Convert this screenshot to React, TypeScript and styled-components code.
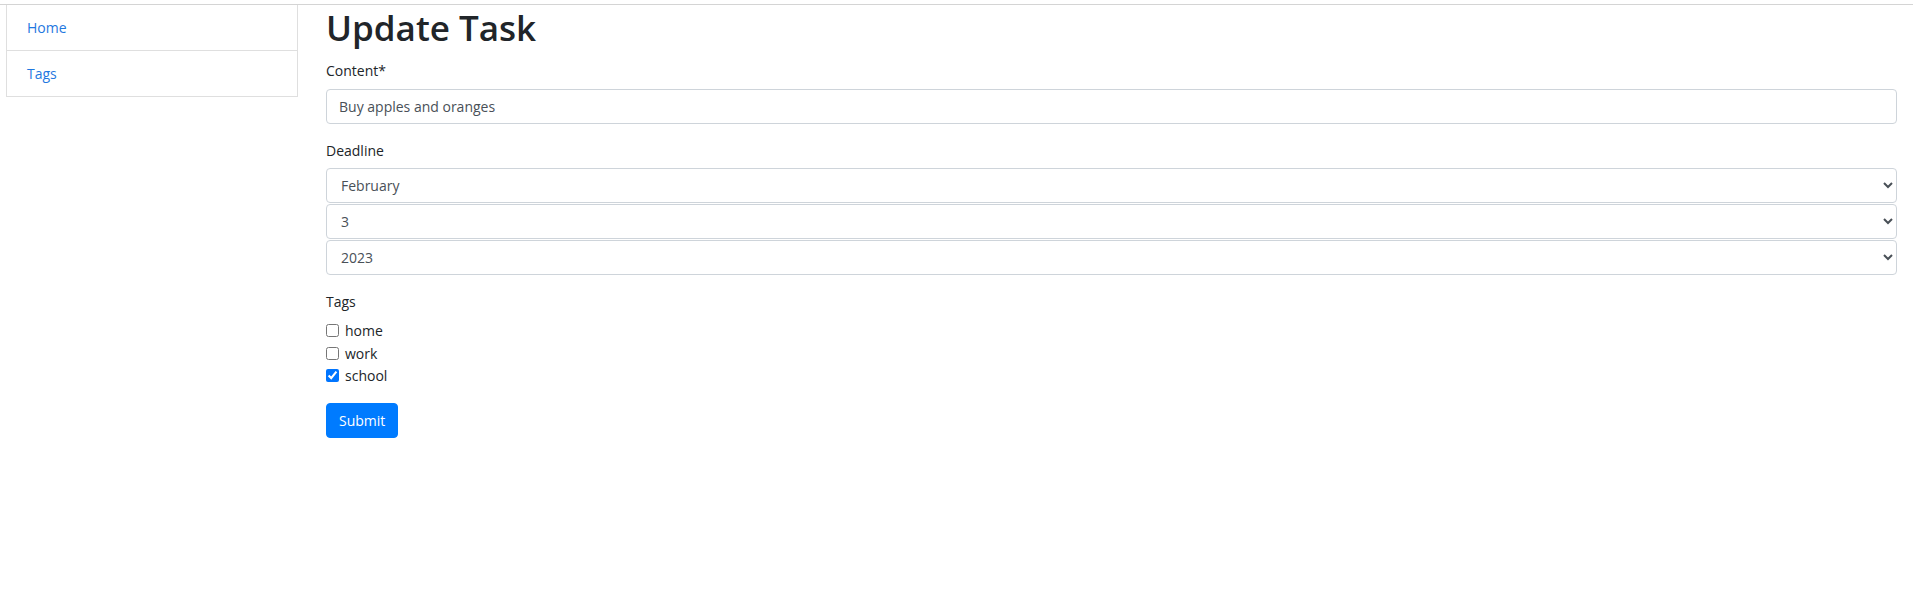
import React from "react";
import styled, { createGlobalStyle } from "styled-components";

const GlobalStyle = createGlobalStyle`
  html, body {
    margin: 0;
    padding: 0;
    background: #fff;
  }
  body {
    font-family: "Open Sans", "Liberation Sans", sans-serif;
    font-size: 14px;
    line-height: 1.5;
    color: #212529;
  }
  * {
    box-sizing: border-box;
  }
`;

const TopRule = styled.div`
  height: 5px;
  margin-right: 7px;
  border-bottom: 1px solid #d4d4d4;
`;

const Layout = styled.div`
  display: flex;
  align-items: flex-start;
  gap: 28px;
  padding: 0 23px 0 6px;
`;

const Sidebar = styled.nav`
  width: 292px;
  flex: none;
  display: flex;
  flex-direction: column;
  border: 1px solid rgba(0, 0, 0, 0.125);
  border-top: none;
`;

const SideLink = styled.a`
  display: block;
  padding: 12px 20px;
  line-height: 21px;
  color: #1f78e0;
  text-decoration: none;
  & + & {
    border-top: 1px solid rgba(0, 0, 0, 0.125);
  }
`;

const Main = styled.main`
  flex: 1;
  min-width: 0;
`;

const Title = styled.h1`
  margin: -1px 0 8px;
  font-size: 35px;
  font-weight: 600;
  line-height: 48px;
  color: #212529;
`;

const FormGroup = styled.div`
  margin-bottom: 16px;
`;

const Label = styled.label`
  display: block;
  line-height: 21px;
  margin-bottom: 7.5px;
`;

const TextInput = styled.input`
  display: block;
  width: 100%;
  height: 35px;
  padding: 0 12px;
  font: inherit;
  font-size: 14px;
  color: #495057;
  background: #fff;
  border: 1px solid #ced4da;
  border-radius: 4px;
  outline: none;
`;

const Select = styled.select`
  display: block;
  width: 100%;
  height: 35px;
  padding: 0 8px 0 10px;
  font: inherit;
  font-size: 14px;
  color: #495057;
  background: #fff;
  border: 1px solid #ced4da;
  border-radius: 4px;
  outline: none;
  & + & {
    margin-top: 1px;
  }
`;

const CheckRow = styled.label`
  display: flex;
  align-items: center;
  height: 22.5px;
  line-height: 21px;
`;

const CheckBox = styled.input.attrs({ type: "checkbox" })`
  width: 13px;
  height: 13px;
  margin: 0 6px 0 0;
`;

const SubmitButton = styled.button`
  height: 35px;
  padding: 0 12px;
  font: inherit;
  font-size: 14px;
  color: #fff;
  background: #007bff;
  border: 1px solid #007bff;
  border-radius: 4px;
  cursor: pointer;
`;

const months = [
  "January", "February", "March", "April", "May", "June",
  "July", "August", "September", "October", "November", "December",
];

const tags = [
  { name: "home", checked: false },
  { name: "work", checked: false },
  { name: "school", checked: true },
];

const App: React.FC = () => (
  <>
    <GlobalStyle />
    <TopRule />
    <Layout>
      <Sidebar>
        <SideLink href="#">Home</SideLink>
        <SideLink href="#">Tags</SideLink>
      </Sidebar>
      <Main>
        <Title>Update Task</Title>
        <FormGroup>
          <Label htmlFor="content">Content*</Label>
          <TextInput id="content" defaultValue="Buy apples and oranges" />
        </FormGroup>
        <FormGroup>
          <Label>Deadline</Label>
          <Select defaultValue="February">
            {months.map((m) => (
              <option key={m}>{m}</option>
            ))}
          </Select>
          <Select defaultValue="3">
            {Array.from({ length: 31 }, (_, i) => String(i + 1)).map((d) => (
              <option key={d}>{d}</option>
            ))}
          </Select>
          <Select defaultValue="2023">
            {["2022", "2023", "2024", "2025"].map((y) => (
              <option key={y}>{y}</option>
            ))}
          </Select>
        </FormGroup>
        <FormGroup>
          <Label>Tags</Label>
          {tags.map((t) => (
            <CheckRow key={t.name}>
              <CheckBox defaultChecked={t.checked} />
              {t.name}
            </CheckRow>
          ))}
        </FormGroup>
        <SubmitButton type="submit">Submit</SubmitButton>
      </Main>
    </Layout>
  </>
);

export default App;
